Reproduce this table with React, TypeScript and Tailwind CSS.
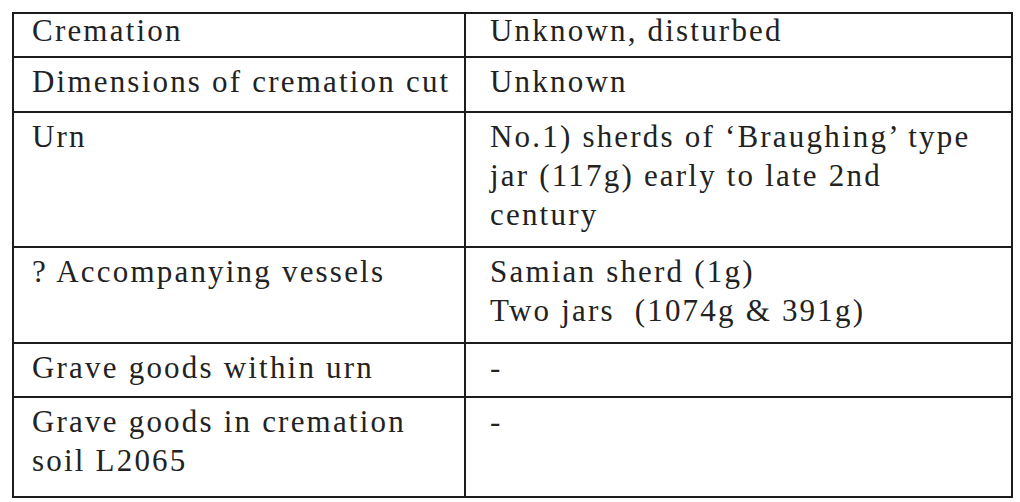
const rows = [
  { label: ["Cremation"], value: ["Unknown, disturbed"], h: "h-[44px]", first: true },
  { label: ["Dimensions of cremation cut"], value: ["Unknown"], h: "h-[55px]" },
  {
    label: ["Urn"],
    value: ["No.1) sherds of \u2018Braughing\u2019 type", "jar (117g) early to late 2nd", "century"],
    h: "h-[135px]",
  },
  {
    label: ["? Accompanying vessels"],
    value: ["Samian sherd (1g)", "Two jars\u00a0 (1074g & 391g)"],
    h: "h-[96px]",
  },
  { label: ["Grave goods within urn"], value: ["-"], h: "h-[54px]" },
  { label: ["Grave goods in cremation", "soil L2065"], value: ["-"], h: "h-[98px]", last: true },
];

const App = () => {
  return (
    <div className="w-[1020px] h-[502px] bg-white pt-[12px] pl-[12px] font-['Liberation_Serif','Times_New_Roman',serif] text-[31px] tracking-[2.2px] text-[#222]">
      <div className="w-[1001px] border-2 border-[#1c1c1c]">
        {rows.map((row, i) => (
          <div
            key={i}
            className={`grid grid-cols-[452px_1fr] ${row.h} ${row.last ? "" : "border-b-2 border-[#1c1c1c]"}`}
          >
            <div
              className={`border-r-2 border-[#1c1c1c] pl-[18px] ${row.first ? "pt-0 leading-[34px]" : "pt-[4px] leading-[39px]"}`}
            >
              {row.label.map((line, j) => (
                <div key={j} className="whitespace-nowrap">{line}</div>
              ))}
            </div>
            <div className={`pl-[24px] ${row.first ? "pt-0 leading-[34px]" : "pt-[4px] leading-[39px]"}`}>
              {row.value.map((line, j) => (
                <div key={j} className="whitespace-pre">{line}</div>
              ))}
            </div>
          </div>
        ))}
      </div>
    </div>
  );
};

export default App;
